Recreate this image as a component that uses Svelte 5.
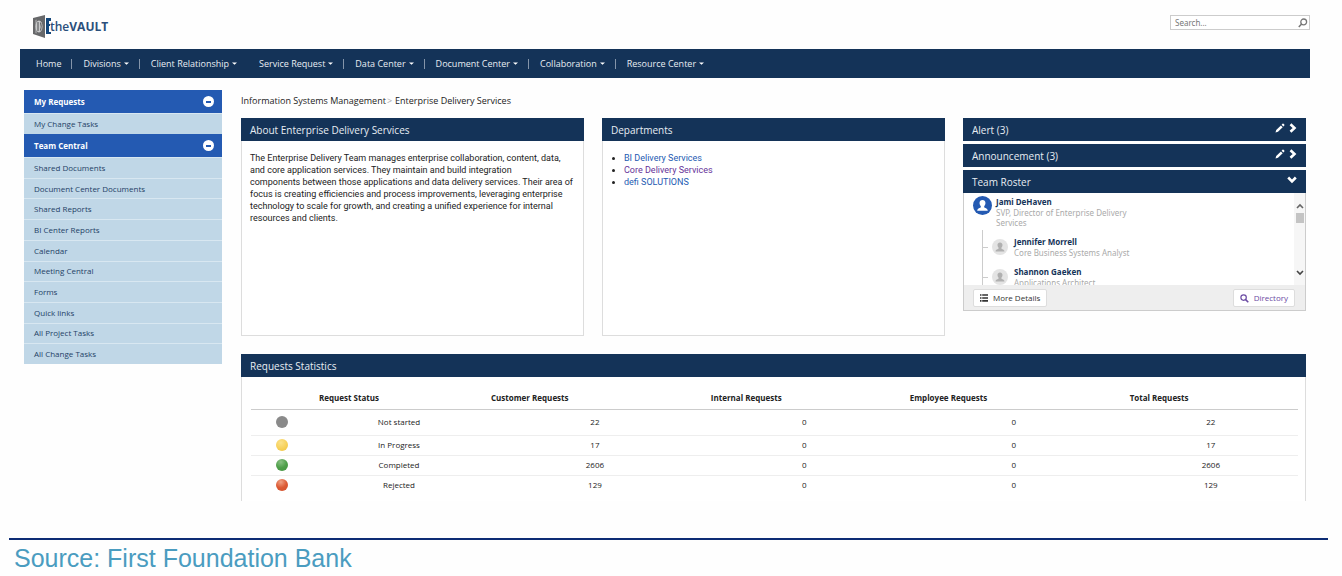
<script>
  const nav = [
    { label: 'Home', menu: false, divider: true },
    { label: 'Divisions', menu: true, divider: true },
    { label: 'Client Relationship', menu: true, divider: false },
    { label: 'Service Request', menu: true, divider: true },
    { label: 'Data Center', menu: true, divider: true },
    { label: 'Document Center', menu: true, divider: true },
    { label: 'Collaboration', menu: true, divider: true },
    { label: 'Resource Center', menu: true, divider: false }
  ];

  const sections = [
    { title: 'My Requests', items: ['My Change Tasks'] },
    {
      title: 'Team Central',
      items: [
        'Shared Documents', 'Document Center Documents', 'Shared Reports',
        'BI Center Reports', 'Calendar', 'Meeting Central', 'Forms',
        'Quick links', 'All Project Tasks', 'All Change Tasks'
      ]
    }
  ];

  const columns = ['Request Status', 'Customer Requests', 'Internal Requests', 'Employee Requests', 'Total Requests'];
  const rows = [
    { tone: 'gray', cells: ['Not started', 22, 0, 0, 22] },
    { tone: 'yellow', cells: ['In Progress', 17, 0, 0, 17] },
    { tone: 'green', cells: ['Completed', 2606, 0, 0, 2606] },
    { tone: 'red', cells: ['Rejected', 129, 0, 0, 129] }
  ];

  const reports = [
    { name: 'Jennifer Morrell', role: 'Core Business Systems Analyst' },
    { name: 'Shannon Gaeken', role: 'Applications Architect' }
  ];
</script>

{#snippet person()}
  <svg class="person" viewBox="0 0 18 18" aria-hidden="true">
    <path d="M9 3.800c1.700 0 2.800 1.200 2.800 2.900 0 1.300-.5 2.400-1.200 3v1c.3.8 3.400.9 3.400 3.300H4c0-2.400 3.100-2.500 3.400-3.300v-1c-.7-.6-1.200-1.700-1.200-3C6.200 5 7.300 3.800 9 3.800z" fill="currentColor" />
  </svg>
{/snippet}

{#snippet pencil()}
  <svg width="10" height="10" viewBox="0 0 10 10" aria-hidden="true">
    <path d="M.5 9.500l.7-2.500 4.700-4.600 1.800 1.800L3 8.800zM6.600 1.700l.9-.9q.5-.4 1 0l.8.800q.4.500 0 1l-.9.900z" fill="#fff" />
  </svg>
{/snippet}

<div class="page">
  <header>
    <a class="logo" href="#home" aria-label="theVAULT">
      <svg width="18" height="23" viewBox="0 0 18 23" aria-hidden="true">
        <path d="M0 3L12 0v23L0 19z" fill="#67686a" />
        <path d="M2 5l2-.5v14L2 18z" fill="#8c8d8f" />
        <ellipse cx="6" cy="11.500" rx="3.500" ry="6" fill="#c9cacb" />
        <path d="M5 7v9M7.500 7.500q1.500 4 0 8" stroke="#67686a" stroke-width="1.300" fill="none" />
        <path d="M13 3h5v3h-2v3h1v2h-1v6h2v2h-5z" fill="#14477b" />
      </svg>
      <span class="wordmark">the<b>VAULT</b></span>
    </a>
    <form class="search" onsubmit={(e) => e.preventDefault()}>
      <input type="text" placeholder="Search..." aria-label="Search" />
      <button type="submit" aria-label="Run search">
        <svg width="10" height="10" viewBox="0 0 10 10" aria-hidden="true">
          <circle cx="5.700" cy="3.900" r="2.900" fill="none" stroke="#777" stroke-width="1.300" />
          <path d="M3.600 6L.8 9" stroke="#777" stroke-width="1.500" />
        </svg>
      </button>
    </form>
  </header>

  <nav class="topnav">
    {#each nav as item}
      <a href="#nav" class:divider={item.divider}>
        {item.label}{#if item.menu}<svg width="5" height="3" viewBox="0 0 5 3" aria-hidden="true"><path d="M0 .5h5L2.500 2.800z" fill="#fff" /></svg>{/if}
      </a>
    {/each}
  </nav>

  <div class="body">
    <aside>
      {#each sections as section}
        <section>
          <h2>
            {section.title}
            <button aria-label="Collapse {section.title}"></button>
          </h2>
          <ul class:long={section.items.length > 1}>
            {#each section.items as item}
              <li><a href="#item">{item}</a></li>
            {/each}
          </ul>
        </section>
      {/each}
    </aside>

    <main>
      <div class="crumbs">
        <a href="#ism">Information Systems Management</a><span>&gt;</span><a href="#eds">Enterprise Delivery Services</a>
      </div>

      <div class="panels">
        <section class="panel">
          <h2 class="bar">About Enterprise Delivery Services</h2>
          <p>
            The Enterprise Delivery Team manages enterprise collaboration, content, data,<br />
            and core application services. They maintain and build integration<br />
            components between those applications and data delivery services. Their area of<br />
            focus is creating efficiencies and process improvements, leveraging enterprise<br />
            technology to scale for growth, and creating a unified experience for internal<br />
            resources and clients.
          </p>
        </section>

        <section class="panel">
          <h2 class="bar">Departments</h2>
          <ul class="links">
            <li><a href="#bi">BI Delivery Services</a></li>
            <li><a class="seen" href="#core">Core Delivery Services</a></li>
            <li><a href="#defi">defi SOLUTIONS</a></li>
          </ul>
        </section>

        <div class="stack">
          {#each ['Alert (3)', 'Announcement (3)'] as title}
            <h2 class="bar">
              {title}
              <span class="tools">
                <button aria-label="Edit {title}">{@render pencil()}</button>
                <button aria-label="Open {title}">
                  <svg width="8" height="10" viewBox="0 0 8 10" aria-hidden="true"><path d="M1.500 1.200L5.500 5l-4 3.800" fill="none" stroke="#fff" stroke-width="2.600" /></svg>
                </button>
              </span>
            </h2>
          {/each}
          <section class="roster">
            <h2 class="bar">
              Team Roster
              <span class="tools">
                <button aria-label="Close Team Roster">
                  <svg width="10" height="8" viewBox="0 0 10 8" aria-hidden="true"><path d="M1.200 1.500L5 5.300l3.800-3.800" fill="none" stroke="#fff" stroke-width="2.600" /></svg>
                </button>
              </span>
            </h2>
            <div class="viewport">
              <div class="people">
                <div class="lead">
                  <span class="avatar main">{@render person()}</span>
                  <div>
                    <strong>Jami DeHaven</strong>
                    <p>SVP, Director of Enterprise Delivery Services</p>
                  </div>
                </div>
                <div class="reports">
                  {#each reports as r}
                    <div class="report">
                      <span class="avatar">{@render person()}</span>
                      <div>
                        <strong>{r.name}</strong>
                        <p>{r.role}</p>
                      </div>
                    </div>
                  {/each}
                </div>
              </div>
              <div class="scroll" aria-hidden="true">
                <svg width="8" height="6" viewBox="0 0 8 6"><path d="M1 5l3-3 3 3" fill="none" stroke="#666" stroke-width="1.600" /></svg>
                <span class="thumb"></span>
                <svg class="down" width="8" height="6" viewBox="0 0 8 6"><path d="M1 1l3 3 3-3" fill="none" stroke="#444" stroke-width="1.600" /></svg>
              </div>
            </div>
            <div class="actions">
              <button>
                <svg width="8" height="8" viewBox="0 0 8 8" aria-hidden="true"><path d="M0 1h1.500M2.200 1H8M0 4h1.500M2.200 4H8M0 6.800h1.500M2.200 6.800H8" stroke="#333" stroke-width="1.700" /></svg>
                More Details
              </button>
              <button class="directory">
                <svg width="9" height="9" viewBox="0 0 9 9" aria-hidden="true"><circle cx="3.600" cy="3.600" r="2.700" fill="none" stroke="#6b4ba3" stroke-width="1.200" /><path d="M5.600 5.600L8.300 8.300" stroke="#6b4ba3" stroke-width="1.500" /></svg>
                Directory
              </button>
            </div>
          </section>
        </div>
      </div>

      <section class="stats">
        <h2 class="bar">Requests Statistics</h2>
        <table>
          <colgroup>
            <col class="c-icon" /><col class="c-status" /><col class="c-wide" /><col class="c-mid" /><col class="c-wide" /><col />
          </colgroup>
          <thead>
            <tr>
              <td></td>
              {#each columns as column}<th scope="col">{column}</th>{/each}
            </tr>
          </thead>
          <tbody>
            {#each rows as row}
              <tr>
                <td><span class="ball {row.tone}"></span></td>
                {#each row.cells as cell}<td>{cell}</td>{/each}
              </tr>
            {/each}
          </tbody>
        </table>
      </section>
    </main>
  </div>

  <footer>Source: First Foundation Bank</footer>
</div>

<style>
  :global(body) { margin: 0; background: #fefefe; }
  .page { font: 8px/12px "Open Sans", sans-serif; color: #333; }
  .page * { box-sizing: border-box; }
  a { color: inherit; text-decoration: none; }
  h2, p, ul { margin: 0; padding: 0; font-size: inherit; font-weight: 400; }
  ul { list-style: none; }
  button { font: inherit; color: inherit; border: 0; background: none; padding: 0; cursor: pointer; }
  svg { display: block; }

  header { display: flex; justify-content: space-between; align-items: flex-start; height: 49px; padding: 15px 32px 0 33px; }
  .logo { display: flex; align-items: center; color: #14477b; }
  .wordmark { margin-left: -1px; font-size: 12px; line-height: 20px; font-weight: 600; color: #2b4f7b; }
  .wordmark b { font-weight: 700; }
  .search { display: flex; align-items: center; width: 140px; height: 15px; border: 1px solid #ccc; background: #fff; }
  .search input { flex: 1; min-width: 0; border: 0; outline: 0; padding: 0 4px; background: none; font: 8px/12px "Noto Sans", sans-serif; }
  .search input::placeholder { color: #777; opacity: 1; }
  .search button { padding-right: 1px; }

  .topnav { display: flex; align-items: center; height: 29px; margin: 0 32px 0 20px; padding-left: 5px; background: #143358; color: #e8edf3; font-size: 9px; }
  .topnav a { position: relative; display: flex; align-items: center; gap: 3px; padding: 0 11px; white-space: nowrap; }
  .topnav a.divider::after { content: ""; position: absolute; right: 0; top: 1px; width: 1px; height: 10px; background: #8495aa; }

  .body { display: flex; gap: 19px; padding: 12px 36px 0 24px; }
  aside { flex: 0 0 198px; color: #1f3f66; }
  aside h2 { display: flex; align-items: center; justify-content: space-between; height: 23px; padding: 0 8px 0 10px; background: #245ab2; color: #fff; font-weight: 700; }
  aside h2 button { display: grid; place-items: center; width: 11px; height: 11px; border-radius: 50%; background: #fff; }
  aside h2 button::before { content: ""; width: 5px; height: 2px; background: #245ab2; }
  aside ul { display: grid; grid-auto-rows: 1fr; min-height: 21px; }
  aside ul.long { min-height: 207px; }
  aside li { display: flex; align-items: center; padding-left: 10px; background: #c0d7e7; border-top: 1px solid #d8e7f1; }

  main { flex: 1; min-width: 0; }
  .crumbs { display: flex; height: 28px; padding-top: 5px; color: #222; font-size: 9px; }
  .crumbs span { margin: 0 3px 0 1px; color: #aaa; }
  .bar { display: flex; align-items: center; justify-content: space-between; height: 23px; padding: 0 9px; background: #143358; color: #e8edf3; font-size: 10px; line-height: 16px; }
  .panels { display: grid; grid-template-columns: repeat(3, 1fr); gap: 18px; align-items: start; }
  .panel { min-height: 218px; border: 1px solid #ddd; border-top: 0; background: #fff; color: #222; font-family: Roboto, sans-serif; font-size: 9px; }
  .panel .bar { margin: 0 -1px; font-family: "Open Sans", sans-serif; }
  .panel p { padding: 11px 8px; }
  .links { padding: 11px 8px 0 21px; list-style: disc; }
  .links a { color: #245ab2; }
  .links a.seen { color: #663399; }

  .stack { display: grid; gap: 3px; }
  .tools { display: flex; align-items: center; gap: 4px; padding-bottom: 3px; }
  .roster { border: 1px solid #ccc; border-top: 0; background: #fff; }
  .roster .bar { margin: 0 -1px; }
  .viewport { display: flex; height: 92px; overflow: hidden; }
  .people { flex: 1; padding: 3px 0 0 9px; font-family: "Noto Sans", sans-serif; }
  .people p { color: #aaa; line-height: 10px; }
  .people strong { display: block; color: #143358; line-height: 12px; }
  .lead { display: flex; gap: 4px; height: 34px; }
  .lead div { width: 136px; }
  .avatar { flex: none; width: 16px; height: 16px; border-radius: 50%; background: #e4e4e4; color: #b0b0b0; }
  .avatar.main { width: 19px; height: 19px; background: #245ab2; color: #fff; }
  .person { width: 100%; height: 100%; }
  .reports { margin-left: 9px; border-left: 1px solid #ccc; }
  .report { display: flex; align-items: center; gap: 6px; height: 30px; padding-top: 4px; }
  .report::before { content: ""; width: 5px; height: 1px; margin-right: -2px; background: #ccc; }
  .scroll { display: flex; flex-direction: column; align-items: center; width: 11px; padding: 10px 0 9px; background: #f6f6f6; }
  .thumb { width: 8px; height: 10px; margin-top: 4px; background: #c4c4c4; }
  .down { margin-top: auto; }
  .actions { display: flex; justify-content: space-between; padding: 4px 10px 3px 9px; background: #eee; }
  .actions button { display: flex; align-items: center; gap: 5px; height: 18px; padding: 0 6px; border: 1px solid #ddd; border-radius: 2px; background: #fff; }
  .actions .directory { color: #6b4ba3; }

  .stats { margin-top: 18px; padding-bottom: 6px; border: 1px solid #ddd; border-width: 0 1px; background: #fff; }
  .stats .bar { margin: 0 -1px; }
  table { width: calc(100% - 16px); margin: 0 8px 0 9px; table-layout: fixed; border-collapse: collapse; color: #222; }
  .c-icon { width: 62px; }
  .c-status { width: 172px; }
  .c-wide { width: 21%; }
  .c-mid { width: 19%; }
  td, th { height: 20px; padding: 0; text-align: center; border-bottom: 1px solid #eee; }
  thead td, thead th { height: 32px; padding: 10px 0 0 6px; text-align: left; font-weight: 700; border-color: #ccc; }
  tbody tr:first-child td { height: 26px; }
  tbody tr:last-child td { border: 0; }
  .ball { display: block; width: 12px; height: 12px; margin: 0 auto; border-radius: 50%; }
  .gray { background: #8a8a8a; }
  .yellow { background: radial-gradient(circle at 40% 30%, #fbe28b, #f6cf55 60%, #ecc044); }
  .green { background: radial-gradient(circle at 40% 25%, #8ac184, #4f9f4a 50%, #459440); }
  .red { background: radial-gradient(circle at 40% 25%, #f0a184, #dc5a34 50%, #d04f2b); }

  footer { margin: 37px 14px 0 9px; padding: 4px 5px 0; border-top: 2px solid #0d2c74; color: #4a9cc0; font: 25px/28px "Liberation Sans", Arial, sans-serif; }
</style>
